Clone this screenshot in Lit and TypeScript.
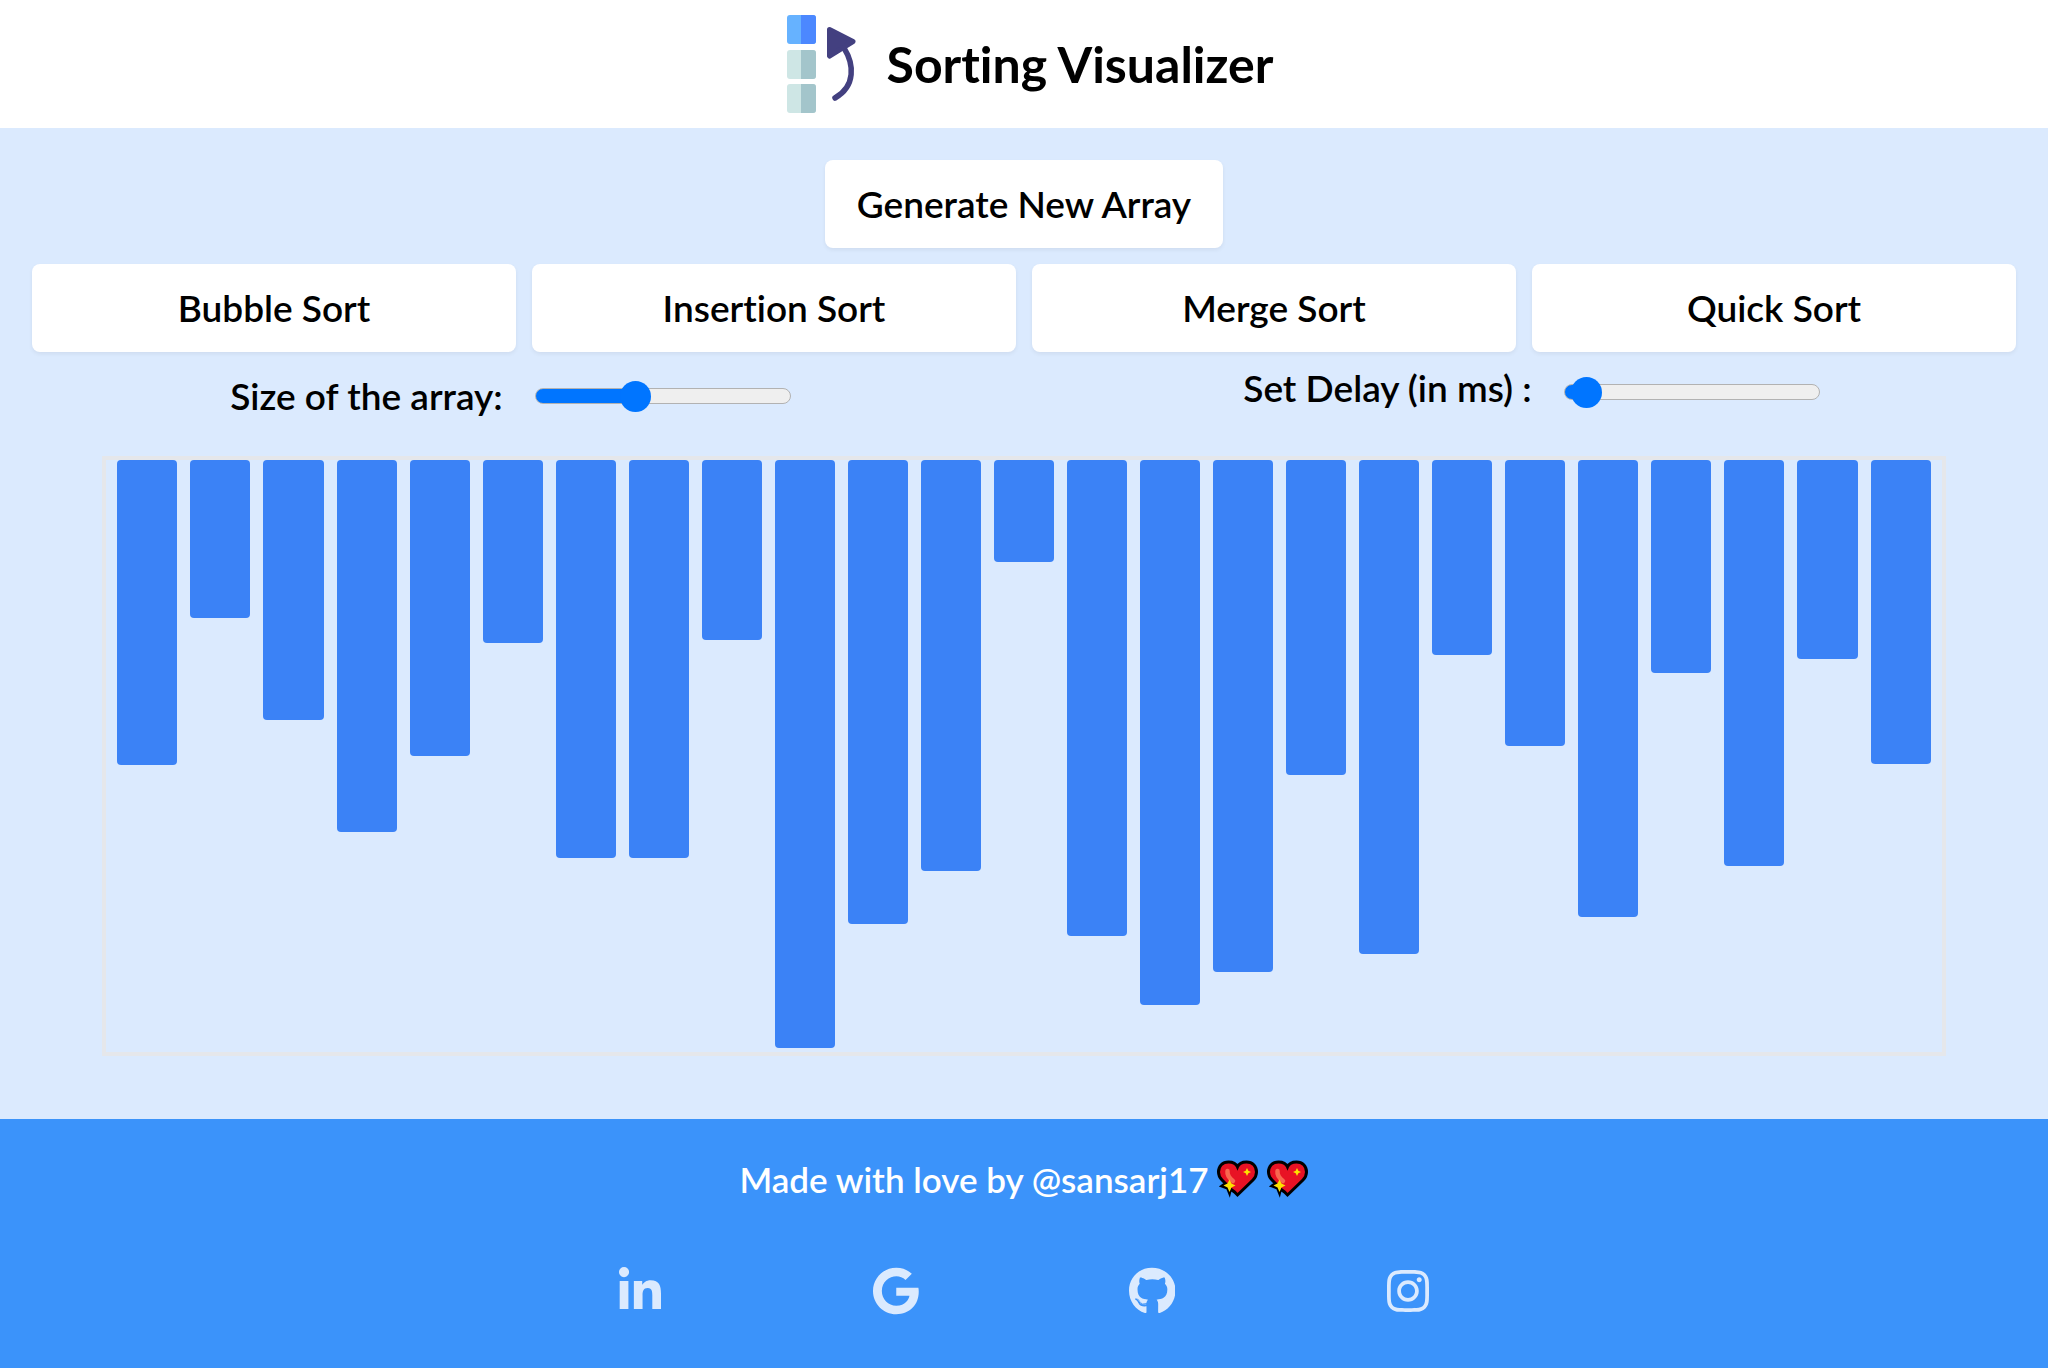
import { LitElement, html, css, svg } from "lit";
import { customElement, state } from "lit/decorators.js";

const heart = html`<svg class="heart" viewBox="0 0 42 38" role="img" aria-label="Sparkling heart">
  <path d="M11.500 2C15.500 2 19 3.500 20.500 7C22 3.500 26 2 29.500 2C35.500 2 39.500 6 39.500 12C39.500 15 38 18 36 20L20.500 35L17.500 32L13.500 29L12.500 33L10.500 28L5 26L8.500 23.500L5 20C3 18 1.500 15 1.500 12C1.500 6 5.500 2 11.500 2Z" fill="#e81224" stroke="#000" stroke-width="3"/>
  <path d="M10.500 11C10 15 12 18 16 21" fill="none" stroke="#f8684f" stroke-width="4.500" stroke-linecap="round"/>
  <path d="M30 8L31.300 10.700L34 12L31.300 13.300L30 16L28.700 13.300L26 12L28.700 10.700Z" fill="#fde300"/>
  <path d="M12.500 19.500L14.500 23.500L18.500 25.500L14.500 27.500L12.500 32L10.500 27.500L6.500 25.500L10.500 23.500Z" fill="#fde300"/>
</svg>`;

const socials = [
  {
    name: "LinkedIn",
    href: "https://www.linkedin.com",
    box: "0 0 448 512",
    d: "M100.28 448H7.4V148.9h92.88zM53.79 108.1C24.09 108.1 0 83.5 0 53.8a53.79 53.79 0 0 1 107.58 0c0 29.7-24.1 54.3-53.79 54.3zM447.9 448h-92.68V302.4c0-34.7-.7-79.2-48.29-79.2-48.29 0-55.69 37.7-55.69 76.7V448h-92.78V148.9h89.08v40.8h1.3c12.4-23.5 42.69-48.3 87.88-48.3 94 0 111.28 61.9 111.28 142.3V448z",
  },
  {
    name: "Google",
    href: "https://www.google.com",
    box: "0 0 488 512",
    d: "M488 261.8C488 403.3 391.1 504 248 504 110.8 504 0 393.2 0 256S110.8 8 248 8c66.8 0 123 24.5 166.3 64.9l-67.5 64.9C258.5 52.6 94.3 116.6 94.3 256c0 86.5 69.1 156.6 153.7 156.6 98.2 0 135-70.4 140.8-106.9H248v-85.3h236.1c2.3 12.7 3.9 24.9 3.9 41.4z",
  },
  {
    name: "GitHub",
    href: "https://github.com",
    box: "0 0 496 512",
    d: "M165.9 397.4c0 2-2.3 3.6-5.2 3.6-3.3.3-5.6-1.3-5.6-3.6 0-2 2.3-3.6 5.2-3.6 3-.3 5.6 1.3 5.6 3.6zm-31.1-4.5c-.7 2 1.3 4.3 4.3 4.9 2.6 1 5.6 0 6.2-2s-1.3-4.3-4.3-5.2c-2.6-.7-5.5.3-6.2 2.3zm44.2-1.7c-2.9.7-4.9 2.6-4.6 4.9.3 2 2.9 3.3 5.9 2.6 2.9-.7 4.9-2.6 4.6-4.6-.3-1.9-3-3.2-5.9-2.9zM244.8 8C106.1 8 0 113.3 0 252c0 110.9 69.8 205.8 169.5 239.2 12.8 2.3 17.3-5.6 17.3-12.1 0-6.2-.3-40.4-.3-61.4 0 0-70 15-84.7-29.8 0 0-11.4-29.1-27.8-36.6 0 0-22.9-15.7 1.6-15.4 0 0 24.9 2 38.6 25.8 21.9 38.6 58.6 27.5 72.9 20.9 2.3-16 8.800-27.1 16-33.700-55.900-6.200-112.300-14.300-112.300-110.500 0-27.500 7.600-41.300 23.600-58.900-2.600-6.500-11.100-33.300 2.600-67.900 20.900-6.500 69 27 69 27 20-5.600 41.500-8.500 62.800-8.500s42.800 2.900 62.800 8.500c0 0 48.100-33.600 69-27 13.700 34.700 5.200 61.400 2.600 67.900 16 17.700 25.800 31.500 25.800 58.900 0 96.500-58.900 104.200-114.800 110.500 9.200 7.900 17 22.900 17 46.400 0 33.700-.3 75.400-.3 83.600 0 6.500 4.600 14.400 17.300 12.100C428.200 457.800 496 362.900 496 252 496 113.300 383.500 8 244.800 8zM97.200 352.900c-1.300 1-1 3.300.7 5.200 1.600 1.600 3.900 2.300 5.200 1 1.300-1 1-3.300-.7-5.200-1.600-1.600-3.900-2.300-5.200-1zm-10.800-8.100c-.7 1.300.3 2.900 2.300 3.900 1.600 1 3.600.7 4.300-.7.7-1.300-.3-2.900-2.300-3.900-2-.6-3.600-.3-4.300.7zm32.400 35.600c-1.600 1.300-1 4.300 1.300 6.200 2.300 2.300 5.200 2.600 6.500 1 1.300-1.300.7-4.300-1.300-6.200-2.200-2.300-5.200-2.600-6.500-1zm-11.400-14.700c-1.600 1-1.600 3.600 0 5.900 1.600 2.300 4.300 3.300 5.600 2.300 1.600-1.300 1.600-3.900 0-6.200-1.400-2.300-4-3.300-5.600-2z",
  },
  {
    name: "Instagram",
    href: "https://www.instagram.com",
    box: "0 0 448 512",
    d: "M224.100 141c-63.600 0-114.900 51.300-114.900 114.900s51.300 114.900 114.900 114.900S339 319.500 339 255.900 287.700 141 224.100 141zm0 189.600c-41.100 0-74.700-33.500-74.700-74.700s33.500-74.700 74.700-74.700 74.700 33.500 74.700 74.700-33.600 74.700-74.700 74.700zm146.400-194.300c0 14.900-12 26.800-26.800 26.800-14.900 0-26.800-12-26.800-26.800s12-26.800 26.800-26.800 26.800 12 26.800 26.800zm76.100 27.200c-1.700-35.900-9.900-67.700-36.200-93.900-26.200-26.200-58-34.400-93.900-36.200-37-2.100-147.900-2.100-184.900 0-35.800 1.700-67.600 9.900-93.900 36.100s-34.400 58-36.200 93.900c-2.100 37-2.100 147.900 0 184.900 1.700 35.900 9.900 67.700 36.200 93.900s58 34.400 93.900 36.200c37 2.100 147.900 2.100 184.900 0 35.900-1.700 67.700-9.900 93.900-36.200 26.200-26.200 34.400-58 36.200-93.900 2.100-37 2.100-147.800 0-184.800zM398.800 388c-7.800 19.600-22.900 34.700-42.600 42.600-29.500 11.700-99.500 9-132.100 9s-102.700 2.600-132.100-9c-19.600-7.800-34.700-22.900-42.600-42.600-11.700-29.500-9-99.500-9-132.100s-2.600-102.700 9-132.100c7.800-19.600 22.900-34.700 42.600-42.600 29.500-11.700 99.500-9 132.100-9s102.700-2.600 132.100 9c19.600 7.800 34.700 22.900 42.600 42.600 11.700 29.500 9 99.500 9 132.100s2.700 102.700-9 132.100z",
  },
];

const initial = [
  305, 158, 260, 372, 296, 183, 398, 398, 180, 588, 464, 411, 102, 476, 545,
  512, 315, 494, 195, 286, 457, 213, 406, 199, 304,
];

@customElement("app-root")
export class AppRoot extends LitElement {
  static styles = css`
    :host {
      display: flex;
      flex-direction: column;
      min-height: 100vh;
      background: #dbeafe;
      color: #000;
      font-family: Lato, "Noto Sans", sans-serif;
      font-size: 37px;
      font-weight: 600;
      font-variant-ligatures: none;
    }
    * {
      box-sizing: border-box;
    }
    .header {
      display: flex;
      align-items: center;
      justify-content: center;
      gap: 24px;
      height: 128px;
      background: #fff;
    }
    .logo {
      width: 88px;
      height: 100px;
    }
    .title {
      margin: 0;
      font-size: 50px;
      line-height: 64px;
      font-weight: 700;
    }
    .main {
      padding: 32px 0 63px;
    }
    .actions {
      display: grid;
      grid-template-columns: repeat(4, 1fr);
      gap: 16px;
      padding: 0 32px;
    }
    .btn {
      height: 88px;
      padding: 0 32px 2px;
      border: 0;
      border-radius: 8px;
      background: #fff;
      color: inherit;
      font: inherit;
      font-variant-ligatures: none;
      box-shadow: 0 2px 4px rgba(0, 0, 0, 0.06);
      cursor: pointer;
    }
    .wide {
      grid-column: 1 / -1;
      justify-self: center;
    }
    .controls {
      display: grid;
      grid-template-columns: 1fr 1fr;
      align-items: start;
      justify-items: center;
      height: 56px;
      margin-top: 16px;
      padding-right: 6px;
    }
    .control {
      display: flex;
      gap: 32px;
      line-height: 56px;
    }
    .delay {
      line-height: 40px;
    }
    .range {
      appearance: none;
      align-self: center;
      width: 256px;
      height: 16px;
      margin: 0;
      border: 1px solid #b2b2b2;
      border-radius: 8px;
      background: linear-gradient(#0075ff, #0075ff) 0 0 / var(--fill) 100% no-repeat #efefef;
    }
    .delay .range {
      margin-top: 16px;
      align-self: start;
    }
    .range::-webkit-slider-thumb {
      appearance: none;
      width: 31px;
      height: 31px;
      border-radius: 50%;
      background: #0075ff;
    }
    .chart {
      display: flex;
      align-items: flex-start;
      gap: 13px;
      height: 600px;
      margin: 32px 5% 0;
      padding: 0 11px;
      border: 4px solid #e5e7eb;
    }
    .bar {
      flex: 1;
      border-radius: 4px;
      background: #3b82f6;
    }
    .footer {
      flex: 1;
      padding: 32px 0 48px;
      background: #3b93fa;
      color: #fff;
    }
    .credit {
      display: flex;
      align-items: center;
      justify-content: center;
      gap: 8px;
      margin: 0;
      font-size: 35px;
      line-height: 56px;
      font-weight: 600;
    }
    .heart {
      width: 42px;
      height: 38px;
    }
    .links {
      display: grid;
      grid-template-columns: repeat(4, 1fr);
      width: 50%;
      margin: 60px auto 0;
    }
    .link {
      display: flex;
      justify-content: center;
      color: #dbeafe;
    }
    .icon {
      height: 48px;
      fill: currentColor;
    }
  `;

  @state() private values = initial;
  @state() private size = 38;
  @state() private delay = 3;

  private generate() {
    this.values = this.values.map(() => 20 + Math.floor(Math.random() * 568));
  }

  private sort() {
    this.values = [...this.values].sort((a, b) => a - b);
  }

  // Filled part of the track ends under the centre of the thumb.
  private fill(value: number) {
    return `--fill: ${Math.round(15 + (value * 225) / 100)}px`;
  }

  render() {
    return html`
      <header class="header">
        <svg class="logo" viewBox="0 0 88 100" aria-hidden="true">
          ${[
            ["#66b2ff", "#4c88ff", 1],
            ["#cee6e5", "#a3c5cb", 36],
            ["#cee6e5", "#a3c5cb", 70],
          ].map(
            ([left, right, y]) => svg`
              <rect x="12" y=${y} width="29" height="29" rx="3" fill=${left} />
              <path d="M26 ${y}H38a3 3 0 0 1 3 3v23a3 3 0 0 1 -3 3H26z" fill=${right} />`
          )}
          <path d="M69 34C79 50 81 72 60 84" fill="none" stroke="#434080" stroke-width="5.500" stroke-linecap="round" />
          <path d="M54.500 15.500L78 27.500L54.500 42Z" fill="#434080" stroke="#434080" stroke-width="5" stroke-linejoin="round" />
        </svg>
        <h1 class="title">Sorting Visualizer</h1>
      </header>
      <main class="main">
        <div class="actions">
          <button class="btn wide" @click=${this.generate}>Generate New Array</button>
          ${["Bubble Sort", "Insertion Sort", "Merge Sort", "Quick Sort"].map(
            (name) => html`<button class="btn" @click=${this.sort}>${name}</button>`
          )}
        </div>
        <div class="controls">
          <div class="control">
            <label for="size">Size of the array:</label>
            <input class="range" id="size" type="range" .value=${String(this.size)} style=${this.fill(this.size)}
              @input=${(e: Event) => (this.size = Number((e.target as HTMLInputElement).value))} />
          </div>
          <div class="control delay">
            <label for="delay">Set Delay (in ms) :</label>
            <input class="range" id="delay" type="range" .value=${String(this.delay)} style=${this.fill(this.delay)}
              @input=${(e: Event) => (this.delay = Number((e.target as HTMLInputElement).value))} />
          </div>
        </div>
        <div class="chart">
          ${this.values.map((v) => html`<div class="bar" style="height: ${v}px"></div>`)}
        </div>
      </main>
      <footer class="footer">
        <p class="credit"><span>Made with love by @sansarj17</span>${heart}${heart}</p>
        <nav class="links">
          ${socials.map(
            (s) => html`<a class="link" href=${s.href} aria-label=${s.name}>
              <svg class="icon" viewBox=${s.box} aria-hidden="true"><path d=${s.d} /></svg>
            </a>`
          )}
        </nav>
      </footer>
    `;
  }
}
